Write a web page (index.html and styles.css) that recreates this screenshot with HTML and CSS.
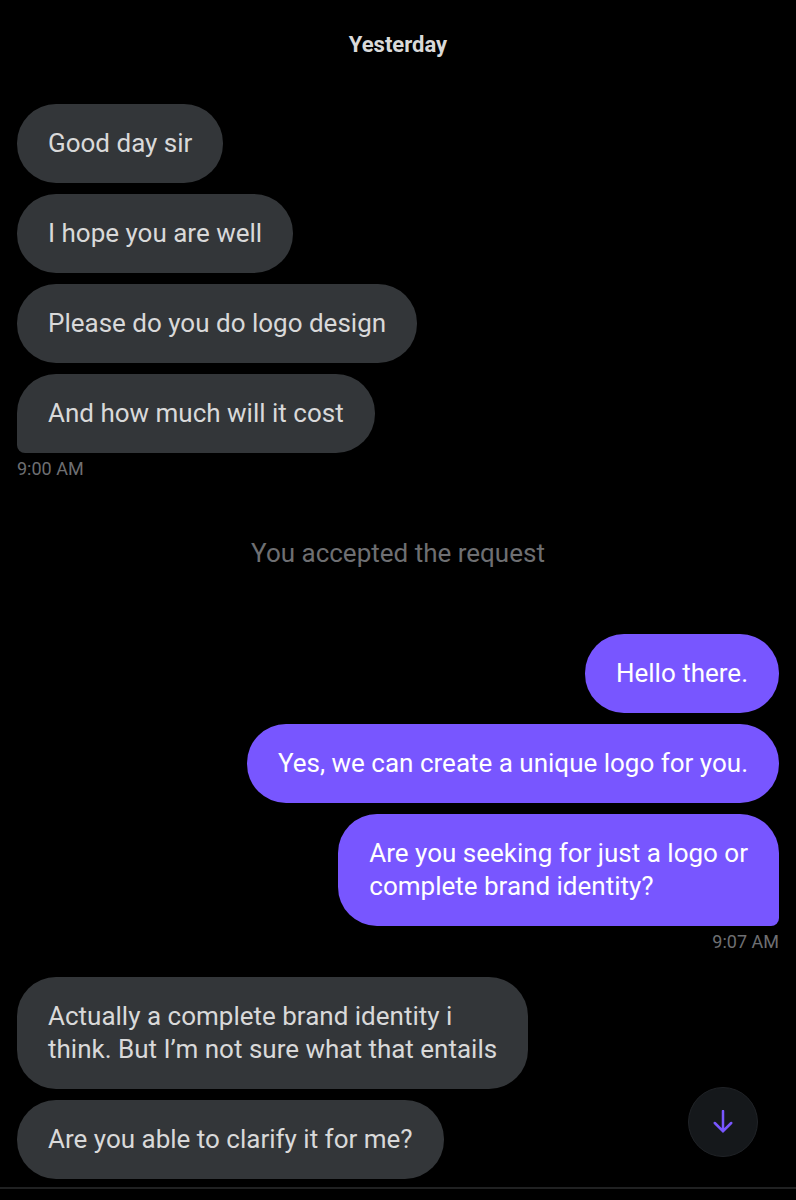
FILE: index.html
```html
<!DOCTYPE html>
<html lang="en">
<head>
<meta charset="utf-8">
<meta name="viewport" content="width=device-width, initial-scale=1">
<title>Messages</title>
<link rel="stylesheet" href="styles.css">
</head>
<body>
<main class="chat">
  <h1 class="day">Yesterday</h1>
  <section class="group received">
    <p class="bubble">Good day sir</p>
    <p class="bubble">I hope you are well</p>
    <p class="bubble">Please do you do logo design</p>
    <p class="bubble tail">And how much will it cost</p>
    <time class="time">9:00 AM</time>
  </section>
  <p class="notice">You accepted the request</p>
  <section class="group sent">
    <p class="bubble">Hello there.</p>
    <p class="bubble">Yes, we can create a unique logo for you.</p>
    <p class="bubble tail">Are you seeking for just a logo or<br>complete brand identity?</p>
    <time class="time">9:07 AM</time>
  </section>
  <section class="group received">
    <p class="bubble">Actually a complete brand identity i<br>think. But I’m not sure what that entails</p>
    <p class="bubble">Are you able to clarify it for me?</p>
  </section>
</main>
<footer class="composer-edge"></footer>
<button class="jump" type="button" aria-label="Scroll to latest message">
  <svg class="arrow" viewBox="0 0 24 24" aria-hidden="true"><path d="M12 1v20M3.800 13l8.200 8.200 8.200-8.200"/></svg>
</button>
</body>
</html>
```
FILE: styles.css
```css
* {
  box-sizing: border-box;
}

body {
  margin: 0;
  min-height: 100vh;
  background: #000;
  color: #d9d9d9;
  font-family: Roboto, "Noto Sans", sans-serif;
  font-size: 26px;
  line-height: 33px;
}

p,
h1 {
  margin: 0;
}

.chat {
  display: flex;
  flex-direction: column;
  padding: 33px 17px 8px;
}

.day {
  margin-bottom: 47px;
  font-size: 22px;
  line-height: 24px;
  font-weight: 700;
  text-align: center;
}

.group {
  display: flex;
  flex-direction: column;
  align-items: flex-start;
  gap: 11px;
}

.bubble {
  padding: 23px 31px;
  border-radius: 39px;
  background: #333639;
}

.received .tail {
  border-bottom-left-radius: 8px;
}

.sent {
  align-items: flex-end;
  margin-bottom: 23px;
}

.sent .bubble {
  background: #7856ff;
  color: #fff;
}

.sent .tail {
  border-bottom-right-radius: 8px;
}

.time {
  margin-top: -7px;
  color: #6e6f72;
  font-size: 18px;
  line-height: 24px;
}

.notice {
  margin: 56px 0 64px;
  color: #6e6f72;
  text-align: center;
}

.composer-edge {
  border-top: 2px solid #202122;
}

.jump {
  position: fixed;
  right: 38px;
  bottom: 43px;
  display: grid;
  place-items: center;
  width: 70px;
  height: 70px;
  padding: 0;
  border: 1px solid #202327;
  border-radius: 50%;
  background: #15181b;
}

.arrow {
  width: 24px;
  height: 24px;
  fill: none;
  stroke: #7856ff;
  stroke-width: 2.5;
  stroke-linecap: round;
}
```
